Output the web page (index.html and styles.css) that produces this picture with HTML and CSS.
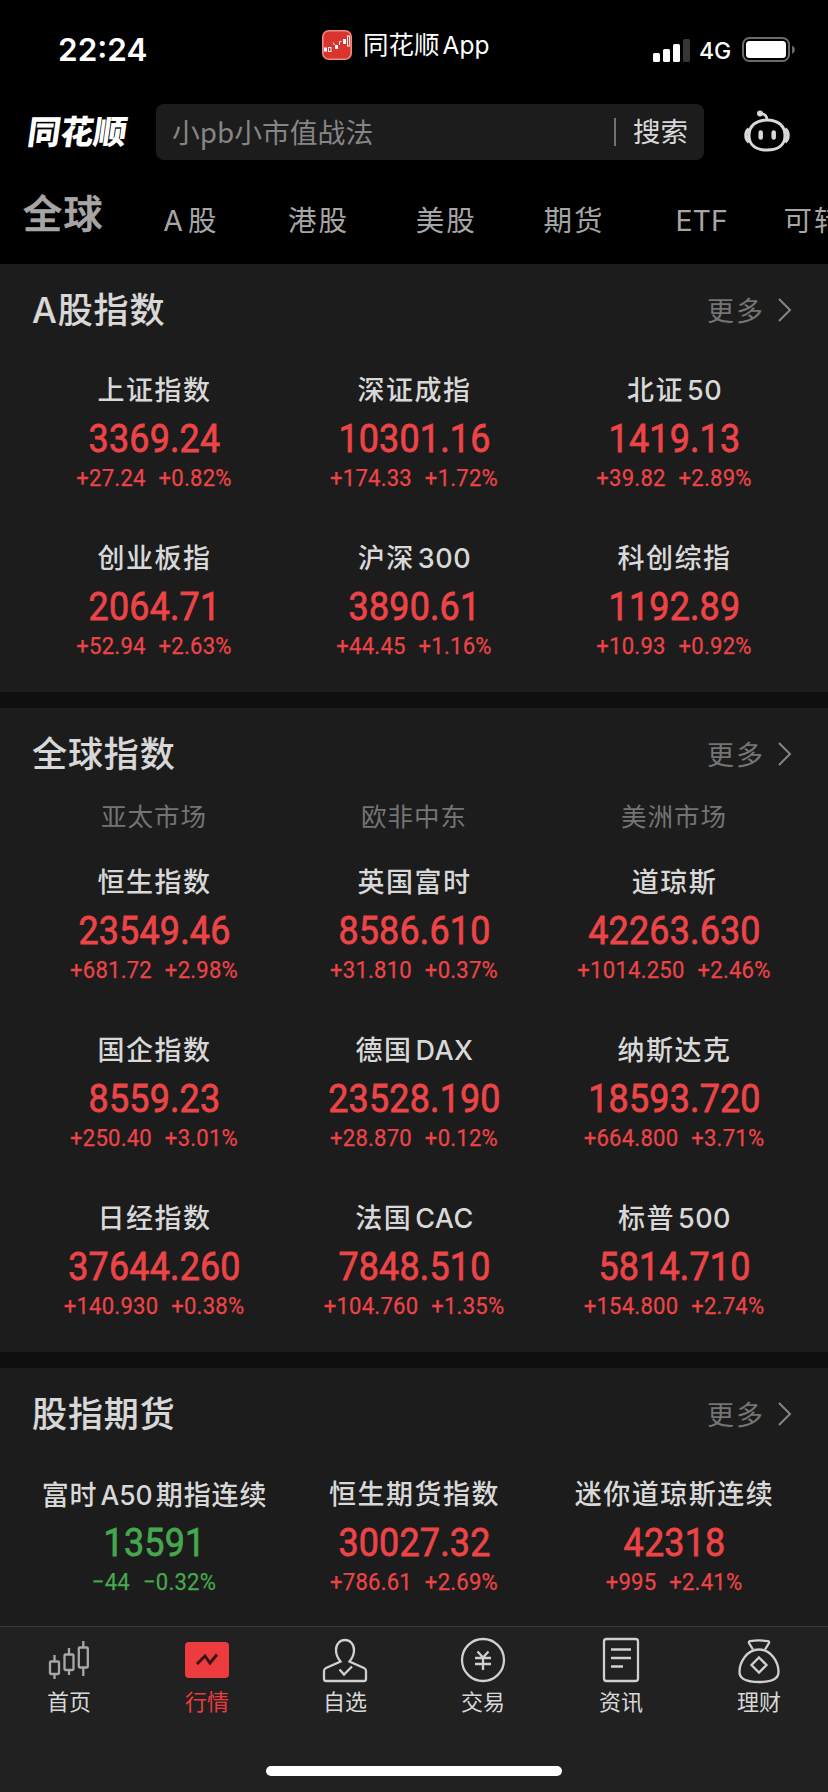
FILE: index.html
```html
<!DOCTYPE html>
<html lang="zh-CN">
<head>
<meta charset="utf-8">
<title>同花顺</title>
<link rel="stylesheet" href="styles.css">
</head>
<body>
<div class="screen">
  <header class="status">
    <span class="time">22:24</span>
    <span class="app">
      <svg width="30" height="30" viewBox="0 0 30 30"><rect x=".8" y=".8" width="28.4" height="28.4" rx="6" fill="#d9352f" stroke="#ee8a83" stroke-width="1.6"/><g fill="#fff"><rect x="2" y="17.500" width="3" height="4"/><rect x="13" y="15" width="3" height="4"/><rect x="21" y="9" width="3" height="5"/></g><g fill="none" stroke="#fff" stroke-width=".9"><rect x="6.500" y="17.500" width="2.500" height="4"/><rect x="25.500" y="6" width="2" height="10"/><path d="M11 12.500l1.500 2.500M17.500 15v-3.500h2"/></g></svg>
      <span>同花顺<span class="app-latin">App</span></span>
    </span>
    <span class="signals">
      <svg width="38" height="24" viewBox="0 0 38 24" fill="#fff"><rect x="0" y="14" width="7" height="9" rx="1.500"/><rect x="10" y="10" width="7" height="13" rx="1.500"/><rect x="20" y="5" width="7" height="18" rx="1.500"/><rect x="30" y="0" width="7" height="23" rx="1.500" fill="#363636"/></svg>
      <span class="net">4G</span>
      <svg width="54" height="26" viewBox="0 0 54 26"><rect x="1" y="1" width="46" height="23" rx="6.500" fill="none" stroke="#6a6a6a" stroke-width="2"/><rect x="4" y="4" width="40" height="17" rx="3.500" fill="#fff"/><path d="M50 8.500q3 1.500 3 4.200t-3 4.200z" fill="#6a6a6a"/></svg>
    </span>
  </header>

  <div class="searchbar">
    <div class="logo">同花顺</div>
    <div class="search"><span class="query">小pb小市值战法</span><i class="bar"></i><span class="go">搜索</span></div>
    <svg class="robot" width="48" height="44" viewBox="0 0 48 44" fill="none" stroke="#d8d8d8" stroke-width="3"><path d="M24 11c-11 0-18 6-18 15.500S13 41 24 41s18-5 18-14.500S35 11 24 11z"/><path d="M6 20c-4 3-4 10 0 13M42 20c4 3 4 10 0 13" stroke-width="3.500"/><path d="M24 11c0-4-2-6-6-6.500" stroke-width="2.600"/><circle cx="17" cy="4.500" r="3" fill="#d8d8d8" stroke="none"/><path d="M17.700 23.500v5M30.700 23.500v5" stroke-width="4.500" stroke-linecap="round"/></svg>
  </div>

  <nav class="tabs">
    <span class="tab on">全球</span><span class="tab"><b class="a">A</b>股</span><span class="tab">港股</span><span class="tab">美股</span><span class="tab">期货</span><span class="tab etf">ETF</span><span class="tab">可转债</span>
  </nav>

  <main class="content">
    <section class="panel">
      <div class="head"><h2>A股指数</h2><span class="more"><span>更多</span><svg width="14" height="24" viewBox="0 0 14 24"><path d="M1 1l11 11L1 23"/></svg></span></div>
      <div class="grid">
        <div class="cell"><div class="name">上证指数</div><div class="val">3369.24</div><div class="chg"><span>+27.24</span><span>+0.82%</span></div></div>
        <div class="cell"><div class="name">深证成指</div><div class="val">10301.16</div><div class="chg"><span>+174.33</span><span>+1.72%</span></div></div>
        <div class="cell"><div class="name">北证<i>50</i></div><div class="val">1419.13</div><div class="chg"><span>+39.82</span><span>+2.89%</span></div></div>
        <div class="cell"><div class="name">创业板指</div><div class="val">2064.71</div><div class="chg"><span>+52.94</span><span>+2.63%</span></div></div>
        <div class="cell"><div class="name">沪深<i>300</i></div><div class="val">3890.61</div><div class="chg"><span>+44.45</span><span>+1.16%</span></div></div>
        <div class="cell"><div class="name">科创综指</div><div class="val">1192.89</div><div class="chg"><span>+10.93</span><span>+0.92%</span></div></div>
      </div>
    </section>

    <section class="panel">
      <div class="head"><h2>全球指数</h2><span class="more"><span>更多</span><svg width="14" height="24" viewBox="0 0 14 24"><path d="M1 1l11 11L1 23"/></svg></span></div>
      <div class="grid regions"><span>亚太市场</span><span>欧非中东</span><span>美洲市场</span></div>
      <div class="grid">
        <div class="cell"><div class="name">恒生指数</div><div class="val">23549.46</div><div class="chg"><span>+681.72</span><span>+2.98%</span></div></div>
        <div class="cell"><div class="name">英国富时</div><div class="val">8586.610</div><div class="chg"><span>+31.810</span><span>+0.37%</span></div></div>
        <div class="cell"><div class="name">道琼斯</div><div class="val">42263.630</div><div class="chg"><span>+1014.250</span><span>+2.46%</span></div></div>
        <div class="cell"><div class="name">国企指数</div><div class="val">8559.23</div><div class="chg"><span>+250.40</span><span>+3.01%</span></div></div>
        <div class="cell"><div class="name">德国<i>DAX</i></div><div class="val">23528.190</div><div class="chg"><span>+28.870</span><span>+0.12%</span></div></div>
        <div class="cell"><div class="name">纳斯达克</div><div class="val">18593.720</div><div class="chg"><span>+664.800</span><span>+3.71%</span></div></div>
        <div class="cell"><div class="name">日经指数</div><div class="val">37644.260</div><div class="chg"><span>+140.930</span><span>+0.38%</span></div></div>
        <div class="cell"><div class="name">法国<i>CAC</i></div><div class="val">7848.510</div><div class="chg"><span>+104.760</span><span>+1.35%</span></div></div>
        <div class="cell"><div class="name">标普<i>500</i></div><div class="val">5814.710</div><div class="chg"><span>+154.800</span><span>+2.74%</span></div></div>
      </div>
    </section>

    <section class="panel">
      <div class="head"><h2>股指期货</h2><span class="more"><span>更多</span><svg width="14" height="24" viewBox="0 0 14 24"><path d="M1 1l11 11L1 23"/></svg></span></div>
      <div class="grid">
        <div class="cell down"><div class="name tight">富时<i>A50</i><em></em>期指连续</div><div class="val">13591</div><div class="chg"><span>−44</span><span>−0.32%</span></div></div>
        <div class="cell"><div class="name">恒生期货指数</div><div class="val">30027.32</div><div class="chg"><span>+786.61</span><span>+2.69%</span></div></div>
        <div class="cell"><div class="name">迷你道琼斯连续</div><div class="val">42318</div><div class="chg"><span>+995</span><span>+2.41%</span></div></div>
      </div>
    </section>
  </main>

  <footer class="dock">
    <div class="items">
      <div class="item first"><svg viewBox="0 0 48 48"><path d="M9.500 18v6M9.500 37v5M24 11v6M24 33v5M38.300 4v6M38.300 31v8"/><rect x="5" y="24.500" width="9" height="12.500" rx="1"/><rect x="19.500" y="17.500" width="9" height="15.500" rx="1"/><rect x="33.800" y="10.500" width="9" height="20" rx="1"/></svg><span>首页</span></div>
      <div class="item on"><svg viewBox="0 0 48 48"><rect x="2" y="5" width="44" height="36" rx="4" fill="#ee3b3e"/><path d="M14 27l8-8 5 7 7-8.500" stroke="#3c1414" stroke-width="3"/></svg><span>行情</span></div>
      <div class="item"><svg viewBox="0 0 48 48"><path d="M19.500 24.500C16.500 21 15 17 15 13c0-6 4-10 9-10s9 4 9 10c0 4-1.500 8-4.500 11.500L43 31q2 1 2 3v8q0 2-2 2H5q-2 0-2-2v-8q0-2 2-3z"/><path d="M18.500 32.500l4.500 5 8-8"/></svg><span>自选</span></div>
      <div class="item"><svg viewBox="0 0 48 48"><circle cx="24" cy="23" r="21"/><path d="M18.500 14.500l5.500 6 5.500-6M16 21h16M16 27h16M24 20v13"/></svg><span>交易</span></div>
      <div class="item"><svg viewBox="0 0 48 48"><rect x="7" y="2" width="34" height="42" rx="2.500"/><path d="M14 12.500h20M14 21h20M14 29.500h12" stroke-width="2.600"/></svg><span>资讯</span></div>
      <div class="item"><svg viewBox="0 0 48 48"><path d="M18 12.500L14 6q-.5-1.500 1-1.800 9-1.500 18 0 1.500.3 1 1.800l-4 6.500"/><path d="M24 12.500C12 12.500 4.500 25 4.500 35c0 7 6 10 19.500 10s19.500-3 19.500-10C43.500 25 36 12.500 24 12.500z"/><path d="M24 20.500l7.500 7.500-7.500 7.500-7.500-7.500z"/></svg><span>理财</span></div>
    </div>
    <div class="home"></div>
  </footer>
</div>
</body>
</html>
```
FILE: styles.css
```css
* { box-sizing: border-box; }
html, body { margin: 0; background: #000; }
body { font-family: Inter, "Noto Sans CJK SC", sans-serif; color: #d8d8d8; }
i, b, em { font-style: normal; font-weight: inherit; }
svg { display: block; flex: none; }
.screen { width: 828px; height: 1792px; overflow: hidden; display: flex; flex-direction: column; }

.status { height: 96px; display: grid; grid-template-columns: 322px 1fr 175px; color: #fff; flex: none; }
.time { padding: 30px 0 0 58px; font-size: 31.5px; line-height: 40px; font-weight: 600; }
.app { display: flex; align-items: center; gap: 11px; height: 90px; font-size: 25.5px; line-height: 36px; }
.app-latin { margin-left: 3px; font-size: 24.5px; }
.signals { display: flex; height: 25px; margin-top: 38px; align-items: center; }
.net { width: 51px; padding-left: 8px; font-size: 23px; font-weight: 500; line-height: 24px; }
.signals svg:last-child { margin-top: -2px; }

.searchbar { height: 72px; display: flex; align-items: flex-start; padding: 8px 0 0 28px; flex: none; }
.logo { width: 128px; height: 56px; line-height: 52px; font-size: 33px; font-weight: 900; font-family: "Noto Sans CJK SC", sans-serif; color: #fff; transform: skewX(-8deg); white-space: nowrap; }
.search { width: 548px; height: 56px; border-radius: 8px; background: #1c1c1c; display: flex; align-items: center; padding: 0 16px; font-size: 28px; line-height: 56px; }
.query { color: #858585; flex: 1; font-size: 27.8px; line-height: 54px; margin-top: -2px; font-family: "Noto Sans CJK SC", sans-serif; }
.bar { width: 2px; height: 28px; background: #707070; margin-right: 17px; }
.go { font-size: 27.5px; }
.robot { margin: 5px 0 0 39px; }

.tabs { height: 96px; display: flex; flex: none; color: #a6a6a6; font-size: 28.5px; letter-spacing: 2px; }
.tab { width: 127.7px; flex: none; text-align: center; line-height: 106px; white-space: nowrap; }
.tab.on { width: 127px; font-size: 39px; line-height: 92px; letter-spacing: 1.500px; font-weight: 500; -webkit-text-stroke: .7px #a6a6a6; }
.tab .a { margin-right: 3px; }
.etf { letter-spacing: 0; }

.content { height: 1362px; overflow: hidden; background: #0f0f0f; display: flex; flex-direction: column; gap: 16px; flex: none; }
.panel { background: #1c1c1c; flex: none; }
.head { height: 92px; padding: 0 36px 0 32px; display: flex; justify-content: space-between; align-items: center; }
h2 { margin: 0; font-size: 35px; line-height: 48px; font-weight: 500; letter-spacing: .9px; -webkit-text-stroke: .15px #d8d8d8; }
.more { display: flex; align-items: center; gap: 13px; color: #747474; font-size: 27px; letter-spacing: 2px; }
.more span { margin-top: -2px; }
.more svg path { fill: none; stroke: #858585; stroke-width: 2; }
.grid { display: grid; grid-template-columns: repeat(3, 260px); padding: 0 24px; }
.regions { height: 48px; text-align: center; font-size: 25.5px; line-height: 34px; letter-spacing: 1px; color: #747474; }
.cell { height: 168px; padding-top: 17px; text-align: center; white-space: nowrap; }
.name { font-size: 27px; line-height: 36px; height: 42px; letter-spacing: 1.500px; font-weight: 500; padding-left: 1px; }
.name i { margin-left: 3px; letter-spacing: .5px; font-weight: 450; }
.name em { display: inline-block; width: 3px; }
.name.tight { letter-spacing: .9px; }
.name.tight i { letter-spacing: 0; font-size: 26.5px; }
.val, .chg { font-family: Roboto, sans-serif; color: #ec4447; transform: scaleX(.92); }
.val { font-size: 39px; line-height: 48px; font-weight: 400; height: 48px; letter-spacing: .2px; -webkit-text-stroke: .8px currentColor; padding-left: 1px; }
.chg { display: flex; justify-content: center; gap: 14px; font-size: 24px; line-height: 30px; letter-spacing: .25px; -webkit-text-stroke: .25px currentColor; }
.down .val, .down .chg { color: #45a84d; }

.dock { height: 166px; background: #212121; border-top: 1px solid #3a3a3a; display: flex; flex-direction: column; align-items: center; flex: none; }
.items { width: 828px; height: 139px; display: grid; grid-template-columns: repeat(6, 1fr); }
.item { display: flex; flex-direction: column; align-items: center; padding-top: 10px; font-size: 22px; line-height: 30px; }
.item svg { width: 48px; height: 48px; fill: none; stroke: #d0d0d0; stroke-width: 2.300; }
.item.first svg { stroke: #a8a8a8; }
.item span { margin-top: 2px; }
.item.on { color: #ee3b3e; }
.item.on svg { stroke: none; }
.home { width: 296px; height: 10px; border-radius: 5px; background: #fff; }
```
